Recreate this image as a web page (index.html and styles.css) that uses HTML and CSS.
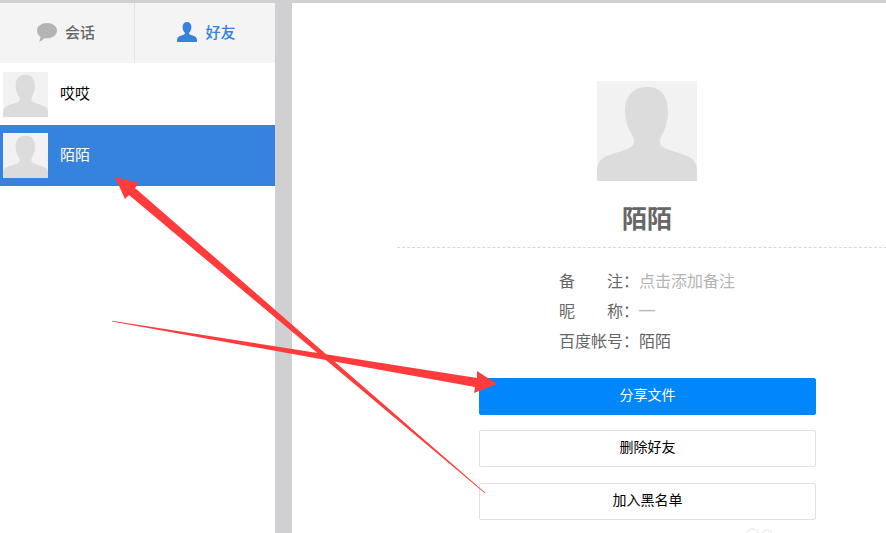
FILE: index.html
```html
<!DOCTYPE html>
<html lang="zh-CN">
<head>
    <meta charset="UTF-8">
    <meta name="viewport" content="width=device-width, initial-scale=1.0">
    <title>好友</title>
    <link rel="stylesheet" href="styles.css">
</head>
<body>
    <div class="page">
        <div class="sidebar">
            <div class="tabs">
                <div class="tab">
                    <svg class="tab-icon" viewBox="0 0 20 20"><path fill="#b4b4b4" d="M10 1C15.500 1 20 4.200 20 8.700c0 4.400-4.500 7.600-10 7.600-.9 0-1.700-.1-2.500-.2C6 17.700 3.700 19.600 1.700 20c1-1.300 1.700-3 1.800-5.300C1.300 13.300 0 11.200 0 8.700 0 4.200 4.500 1 10 1z"/></svg>
                    <span>会话</span>
                </div>
                <div class="tab tab-active">
                    <svg class="tab-icon" viewBox="0 0 20 20"><path fill="#3583dd" d="M10 0c2.900 0 4.400 2.100 4.400 4.900 0 2.300-.9 4.300-2 5.600-.6.800-.4 1.500.6 2 2.500 1.100 6.100 1.800 6.700 3.900.2.800.3 2 .3 3.600H0c0-1.600.1-2.800.3-3.600.6-2.100 4.200-2.800 6.700-3.900 1-.5 1.200-1.200.6-2-1.100-1.300-2-3.300-2-5.600C5.600 2.100 7.100 0 10 0z"/></svg>
                    <span>好友</span>
                </div>
            </div>
            <ul class="friends">
                <li class="friend">
                    <svg class="avatar avatar-small" viewBox="0 0 100 100"><use href="#silhouette"/></svg>
                    <span>哎哎</span>
                </li>
                <li class="friend friend-active">
                    <svg class="avatar avatar-small" viewBox="0 0 100 100"><use href="#silhouette"/></svg>
                    <span>陌陌</span>
                </li>
            </ul>
        </div>

        <div class="detail">
            <svg class="avatar avatar-large" viewBox="0 0 100 100">
                <g id="silhouette">
                    <rect width="100" height="100" fill="#f2f2f2"/>
                    <path fill="#dcdcdc" d="M50 6C63 6 71 14 71 31C71 42 67 50 64 56C62 61 63 64 66 66C72 70 88 73 94 77C98 80 100 84 100 90V100H0V90C0 84 2 80 6 77C12 73 28 70 34 66C37 64 38 61 36 56C33 50 28 42 28 31C28 14 37 6 50 6Z"/>
                </g>
            </svg>
            <h2 class="name">陌陌</h2>
            <div class="info">
                <div class="info-row"><span class="info-label spread"><i>备</i><i>注</i></span><span>：</span><span class="placeholder">点击添加备注</span></div>
                <div class="info-row"><span class="info-label spread"><i>昵</i><i>称</i></span><span>：</span><span class="placeholder dash">—</span></div>
                <div class="info-row"><span class="info-label">百度帐号</span><span>：</span><span>陌陌</span></div>
            </div>
            <div class="actions">
                <button class="btn btn-primary">分享文件</button>
                <button class="btn">删除好友</button>
                <button class="btn">加入黑名单</button>
            </div>
        </div>
    </div>

    <!-- annotation arrows drawn over the screenshot -->
    <svg class="arrows" width="886" height="533" viewBox="0 0 886 533">
        <polygon fill="#ff3b3b" points="112,320.800 477,378 477,371 497,384 474,393 475,387 112,321.400"/>
        <polygon fill="#ff3b3b" points="485.300,492.800 135,188 139,183 115,177 125,199 129,195 484.800,493.300"/>
        <circle cx="752.500" cy="535" r="6" fill="none" stroke="#e6e6e6"/>
        <circle cx="767" cy="535" r="5" fill="none" stroke="#e6e6e6"/>
    </svg>
</body>
</html>
```

FILE: styles.css
```css
* {
    box-sizing: border-box;
}
html, body {
    height: 100%;
}
body {
    margin: 0;
    overflow: hidden;
    background: #d0d0d2;
    font-family: "Noto Sans CJK SC", "Liberation Sans", sans-serif;
    font-size: 15px;
}
.page {
    display: flex;
    height: 533px;
    padding-top: 3px;
    gap: 17px;
}
.sidebar {
    flex: none;
    width: 275px;
    background: #fff;
}
.tabs {
    display: flex;
    height: 60px;
    background: #f4f4f4;
}
.tab {
    flex: 1;
    display: flex;
    align-items: center;
    justify-content: center;
    gap: 8px;
    color: #666;
    font-size: 15px;
    font-weight: 500;
}
.tab span {
    margin-bottom: 4px;
}
.tab:first-child {
    flex: none;
    width: 135px;
    padding-right: 2px;
    border-right: 1px solid #e4e4e4;
}
.tab-active {
    padding-left: 3px;
    color: #3583dd;
}
.tab-icon {
    width: 20px;
    height: 20px;
    margin-bottom: 2px;
}
.friends {
    list-style: none;
    margin: 0;
    padding: 0;
}
.friend {
    display: flex;
    align-items: center;
    gap: 12px;
    height: 62px;
    padding-left: 3px;
    color: #000;
}
.friend span {
    margin-bottom: 4px;
}
.friend-active {
    height: 61px;
    background: #3583dd;
    color: #fff;
}
.avatar {
    display: block;
    flex: none;
}
.avatar-small {
    width: 45px;
    height: 45px;
}
.avatar-large {
    width: 100px;
    height: 100px;
    margin-left: 200px;
}
.detail {
    flex: 1;
    padding: 78px 0 0 105px;
    background: #fff;
}
.name {
    width: 500px;
    height: 34px;
    margin: 19px 0 13px;
    line-height: 34px;
    font-size: 25px;
    font-weight: 700;
    color: #666;
    text-align: center;
}
.info {
    border-top: 1px dashed #d8d8d8;
    padding: 17px 0 0 162px;
    color: #666;
    font-size: 16px;
}
.info-row {
    display: flex;
    height: 30px;
    line-height: 30px;
}
.info-label {
    width: 64px;
}
.spread {
    display: flex;
    justify-content: space-between;
}
.spread i {
    font-style: normal;
}
.info-row span:nth-child(2) {
    width: 16px;
}
.placeholder {
    color: #b4b4b4;
}
.dash {
    font-family: "Liberation Sans", sans-serif;
}
.actions {
    display: flex;
    flex-direction: column;
    gap: 16px;
    width: 337px;
    margin: 23px 0 0 82px;
}
.btn {
    height: 37px;
    padding: 0 0 5px;
    background: #fff;
    border: 1px solid #e1e1e1;
    border-radius: 2px;
    color: #000;
    font: inherit;
    font-size: 14px;
}
.btn-primary {
    margin-bottom: -1px;
    background: #0087fb;
    border-color: #0087fb;
    color: #fff;
}
.arrows {
    position: absolute;
    top: 0;
    left: 0;
}
```
